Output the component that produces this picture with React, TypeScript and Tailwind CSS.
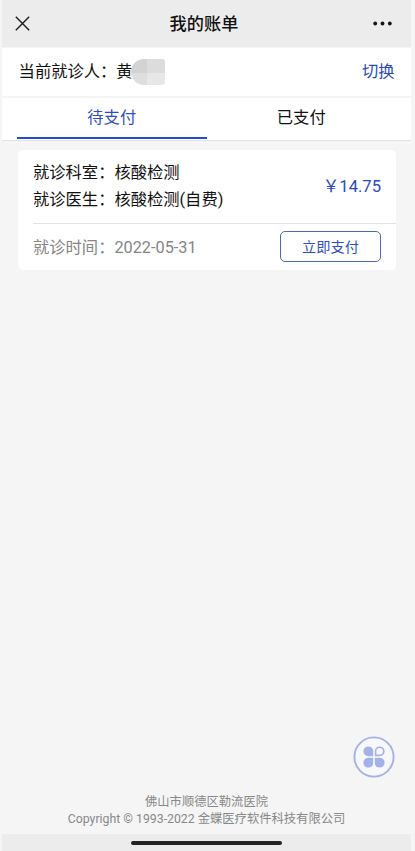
import React from "react";

const TABS = [
  { id: "unpaid", label: "待支付", active: true },
  { id: "paid", label: "已支付", active: false },
];

const BILL = {
  department: "核酸检测",
  doctor: "核酸检测(自费)",
  date: "2022-05-31",
  price: "14.75",
};

const NavBar = () => {
  return (
    <header className="relative flex h-[47px] shrink-0 items-center justify-between bg-[#ececec] pl-[13px] pr-[19px]">
      <svg width="15" height="15" viewBox="0 0 15 15" className="text-[#1c1c1c]">
        <path
          d="M0.8 0.8L14.2 14.2M14.2 0.8L0.8 14.2"
          stroke="currentColor"
          strokeWidth="1.4"
          fill="none"
        />
      </svg>
      <h1 className="absolute left-0 right-[5px] top-3 text-center text-[17.2px] leading-6 font-medium text-[#111]">
        我的账单
      </h1>
      <svg width="19" height="5" viewBox="0 0 19 5" className="text-[#151515]">
        <circle cx="2.2" cy="2.5" r="1.9" fill="currentColor" />
        <circle cx="9.5" cy="2.5" r="1.9" fill="currentColor" />
        <circle cx="16.8" cy="2.5" r="1.9" fill="currentColor" />
      </svg>
    </header>
  );
};

const PatientBar = () => {
  return (
    <section className="mt-px flex h-12 shrink-0 items-center justify-between bg-white pl-[16.6px] pr-[16.5px] text-[16.3px] leading-6">
      <div className="flex items-center">
        <span className="w-[114px] overflow-hidden whitespace-nowrap">当前就诊人：黄</span>
        <span className="-ml-[1.6px] -mt-px grid h-[26px] w-[34px] grid-cols-[16px_18px] grid-rows-[14px_12px] overflow-hidden rounded-l-[14px] rounded-r-[3px]">
          <span className="bg-[#d3d3d3]" />
          <span className="bg-[#dcdcdc]" />
          <span className="bg-[#dedede]" />
          <span className="bg-[#e7e7e7]" />
        </span>
      </div>
      <button className="text-[#2b4ab8]">切换</button>
    </section>
  );
};

const Tabs = () => {
  return (
    <nav className="mt-[2px] flex h-[43px] shrink-0 border-b border-[#e2e2e2] bg-white px-[15px]">
      {TABS.map((tab) => (
        <button
          key={tab.id}
          className={
            tab.active
              ? "mb-px flex-1 border-b-2 border-[#2449dc] text-[16.3px] leading-6 text-[#2f4fc0]"
              : "mb-px flex-1 border-b-2 border-transparent text-[16.3px] leading-6 text-[#111]"
          }
        >
          {tab.label}
        </button>
      ))}
    </nav>
  );
};

const BillCard = () => {
  return (
    <article className="mt-[9px] ml-4 mr-[15px] h-[120px] shrink-0 rounded-[5px] bg-white pl-[15px] text-[16.3px]">
      <div className="flex h-[74px] items-center justify-between border-b border-[#e3e3e3] pr-[15px]">
        <div className="leading-[26.5px]">
          <p>就诊科室：{BILL.department}</p>
          <p>就诊医生：{BILL.doctor}</p>
        </div>
        <p className="text-[16.6px] leading-6 text-[#2b4ab8]">￥{BILL.price}</p>
      </div>
      <div className="flex h-[46px] items-center justify-between pr-[15px]">
        <p className="mt-0.5 text-[#858585]">就诊时间：{BILL.date}</p>
        <button className="-mt-px h-[31px] w-[101px] rounded-[5px] border border-[#4c68bb] text-[14.2px] leading-5 text-[#2f4fc0]">
          立即支付
        </button>
      </div>
    </article>
  );
};

const MenuButton = () => {
  return (
    <button className="absolute right-4 bottom-[73.5px] size-[42px]">
      <svg width="42" height="42" viewBox="0 0 42 42">
        <circle cx="21" cy="21" r="19.6" fill="#f7f8fb" stroke="#a3b1e8" strokeWidth="1.9" />
        <g fill="#a3b1e8">
          <path d="M20.2 20.2H15.3A4.9 4.9 0 1 1 20.2 15.3Z" />
          <path d="M20.2 21.8V26.7A4.9 4.9 0 1 1 15.3 21.8Z" />
          <path d="M21.8 21.8H26.7A4.9 4.9 0 1 1 21.8 26.7Z" />
        </g>
        <path
          d="M22.6 19.4V15.3A4.1 4.1 0 1 1 26.7 19.4Z"
          fill="none"
          stroke="#a3b1e8"
          strokeWidth="1.6"
        />
      </svg>
    </button>
  );
};

const App = () => {
  return (
    <div className="h-[851px] w-[415px] overflow-hidden bg-[#f5f5f5] pr-1 pl-0.5 font-[Roboto,'Noto_Sans_CJK_SC',sans-serif] text-[#111]">
      <main className="relative flex h-full flex-col">
        <NavBar />
        <PatientBar />
        <Tabs />
        <BillCard />
        <MenuButton />
        <footer className="mt-auto text-center text-[12.3px] leading-[17px] text-[#888]">
          <p>佛山市顺德区勒流医院</p>
          <p>Copyright © 1993-2022 金蝶医疗软件科技有限公司</p>
        </footer>
        <div className="mt-1.5 flex h-[17px] shrink-0 justify-center bg-[#ececec] pt-[6.5px]">
          <div className="h-1 w-[151px] rounded-full bg-[#222]" />
        </div>
      </main>
    </div>
  );
};

export default App;
